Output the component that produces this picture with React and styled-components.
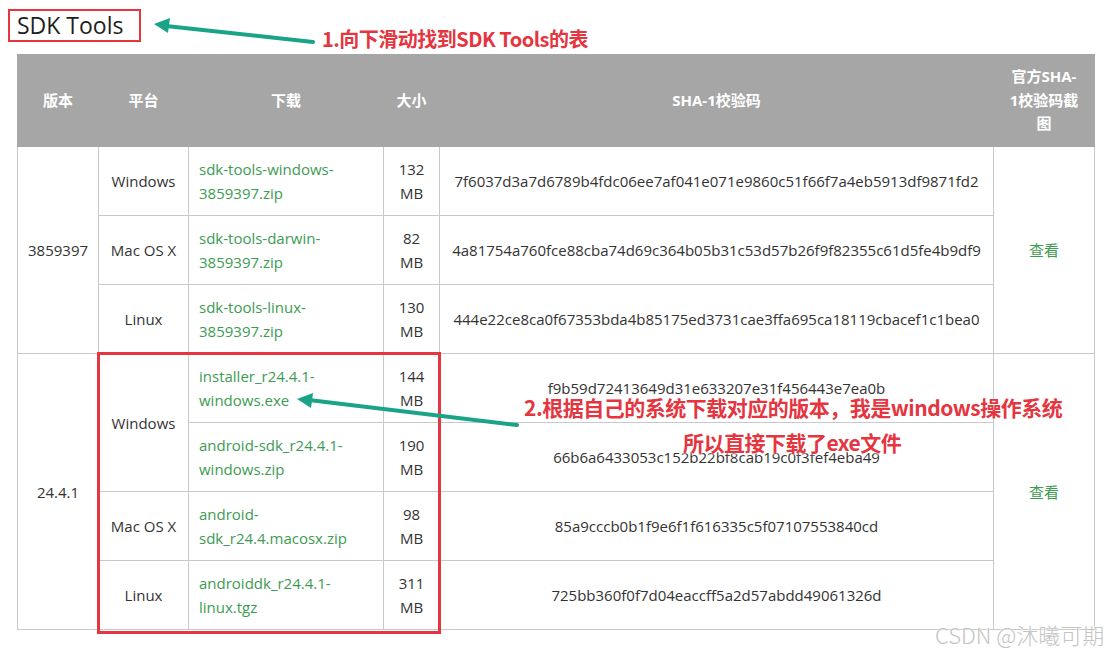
import React from "react";
import styled, { createGlobalStyle } from "styled-components";

const red = "#e5353f";
const teal = "#1aa487";
const link = "#3d9b52";

const GlobalStyle = createGlobalStyle`
  html, body {
    margin: 0;
    padding: 0;
    background: #fff;
  }
  body {
    font-family: "Open Sans", "Noto Sans CJK SC", sans-serif;
    color: #333;
  }
`;

const Stage = styled.div`
  position: relative;
  width: 1110px;
  height: 655px;
  overflow: hidden;
`;

const TitleRow = styled.div`
  display: flex;
  padding: 9px 0 0 8px;
`;

const TitleBox = styled.h2`
  margin: 0;
  border: 2px solid ${red};
  padding: 0 16px 0 7px;
  height: 29px;
  line-height: 29px;
  font-size: 23px;
  font-weight: 400;
  color: #1e1e1e;
`;

const Table = styled.table`
  margin: 12px 0 0 17px;
  width: 1077px;
  table-layout: fixed;
  border-collapse: collapse;
  font-size: 15px;
  line-height: 24px;
`;

const HeadRow = styled.tr`
  height: 92px;
`;

const Th = styled.th`
  background: #a6a6a6;
  color: #fff;
  font-weight: 700;
  font-family: "Open Sans", "Noto Sans CJK SC", sans-serif;
  padding: 8px 8px;
  border: 1px solid #a6a6a6;
  text-align: center;
  line-height: 23.5px;
`;

const Td = styled.td`
  border: 1px solid #c9c9c9;
  padding: 10px 10px;
  height: 48px;
  box-sizing: content-box;
  text-align: ${(p) => (p.$left ? "left" : "center")};
  vertical-align: middle;
  color: #333;
  white-space: ${(p) => (p.$nowrap ? "nowrap" : "normal")};
`;

const Link = styled.a`
  color: ${link};
  text-decoration: none;
`;

const Note = styled.div`
  position: absolute;
  left: ${(p) => p.$x}px;
  top: ${(p) => p.$y}px;
  color: ${red};
  font-family: "Noto Sans CJK SC", sans-serif;
  font-weight: 700;
  font-size: ${(p) => p.$size}px;
  line-height: 1.2;
  white-space: nowrap;
  letter-spacing: -0.5px;
  text-shadow: 0 0 3px #fff, 0 0 3px #fff;
`;

const Frame = styled.div`
  position: absolute;
  left: 97px;
  top: 352px;
  width: 338px;
  height: 276px;
  border: 3px solid ${red};
  pointer-events: none;
`;

const Arrows = styled.svg`
  position: absolute;
  left: 0;
  top: 0;
  pointer-events: none;
`;

const Watermark = styled.div`
  position: absolute;
  left: 935px;
  top: 620px;
  font-family: "Noto Sans CJK SC", sans-serif;
  font-size: 22px;
  line-height: 28px;
  font-weight: 300;
  color: #c4c4c4;
  white-space: nowrap;
  text-shadow: 0 0 2px #fff, 0 0 2px #fff;
`;

const groups = [
  {
    version: "3859397",
    rows: [
      { platform: "Windows", span: 1, file: "sdk-tools-windows-3859397.zip", size: "132 MB", sha: "7f6037d3a7d6789b4fdc06ee7af041e071e9860c51f66f7a4eb5913df9871fd2" },
      { platform: "Mac OS X", span: 1, file: "sdk-tools-darwin-3859397.zip", size: "82 MB", sha: "4a81754a760fce88cba74d69c364b05b31c53d57b26f9f82355c61d5fe4b9df9" },
      { platform: "Linux", span: 1, file: "sdk-tools-linux-3859397.zip", size: "130 MB", sha: "444e22ce8ca0f67353bda4b85175ed3731cae3ffa695ca18119cbacef1c1bea0" },
    ],
  },
  {
    version: "24.4.1",
    rows: [
      { platform: "Windows", span: 2, file: "installer_r24.4.1-windows.exe", size: "144 MB", sha: "f9b59d72413649d31e633207e31f456443e7ea0b" },
      { platform: null, file: "android-sdk_r24.4.1-windows.zip", size: "190 MB", sha: "66b6a6433053c152b22bf8cab19c0f3fef4eba49" },
      { platform: "Mac OS X", span: 1, file: "android-sdk_r24.4.macosx.zip", size: "98 MB", sha: "85a9cccb0b1f9e6f1f616335c5f07107553840cd" },
      { platform: "Linux", span: 1, file: "androiddk_r24.4.1-linux.tgz", size: "311 MB", sha: "725bb360f0f7d04eaccff5a2d57abdd49061326d" },
    ],
  },
];

export default function App() {
  return (
    <>
      <GlobalStyle />
      <Stage>
        <TitleRow>
          <TitleBox>SDK Tools</TitleBox>
        </TitleRow>
        <Table>
          <colgroup>
            <col style={{ width: 81 }} />
            <col style={{ width: 90 }} />
            <col style={{ width: 195 }} />
            <col style={{ width: 56 }} />
            <col style={{ width: 554 }} />
            <col style={{ width: 101 }} />
          </colgroup>
          <thead>
            <HeadRow>
              <Th>版本</Th>
              <Th>平台</Th>
              <Th>下载</Th>
              <Th>大小</Th>
              <Th>SHA-1校验码</Th>
              <Th>
                官方SHA-
                <br />
                1校验码截
                <br />图
              </Th>
            </HeadRow>
          </thead>
          <tbody>
            {groups.map((g) =>
              g.rows.map((r, i) => (
                <tr key={g.version + i}>
                  {i === 0 && <Td rowSpan={g.rows.length}>{g.version}</Td>}
                  {r.platform && <Td rowSpan={r.span}>{r.platform}</Td>}
                  <Td $left>
                    <Link href="#">{r.file}</Link>
                  </Td>
                  <Td>{r.size}</Td>
                  <Td $nowrap>{r.sha}</Td>
                  {i === 0 && (
                    <Td rowSpan={g.rows.length}>
                      <Link href="#">查看</Link>
                    </Td>
                  )}
                </tr>
              ))
            )}
          </tbody>
        </Table>

        <Frame />
        <Arrows width="1110" height="655">
          <g stroke={teal} strokeWidth="4" strokeLinecap="round">
            <line x1="313" y1="42" x2="166" y2="26" />
            <line x1="517" y1="425" x2="309" y2="400" />
          </g>
          <g fill={teal}>
            <polygon points="154,24 170,18 168,33" />
            <polygon points="297,399 313,393 311,408" />
          </g>
        </Arrows>

        <Note $x={322} $y={27} $size={20}>1.向下滑动找到SDK Tools的表</Note>
        <Note $x={524} $y={395} $size={21}>2.根据自己的系统下载对应的版本，我是windows操作系统</Note>
        <Note $x={683} $y={430} $size={21}>所以直接下载了exe文件</Note>

        <Watermark>CSDN @沐曦可期</Watermark>
      </Stage>
    </>
  );
}
